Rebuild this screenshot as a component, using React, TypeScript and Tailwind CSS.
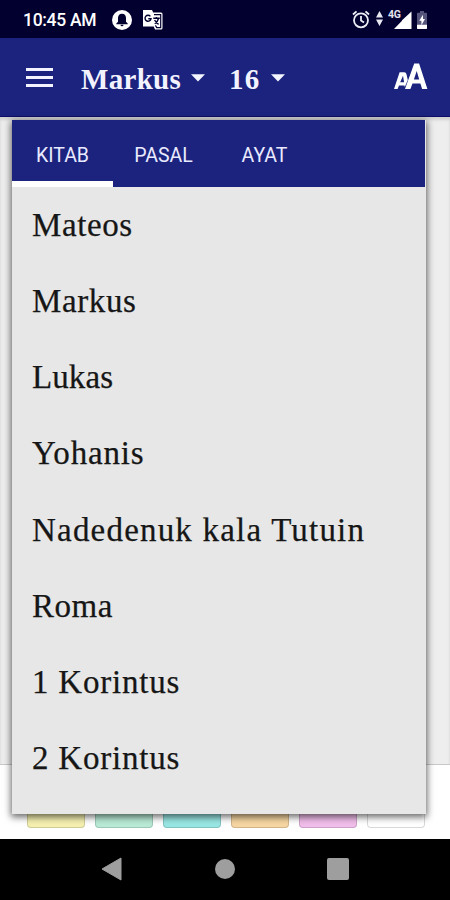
import React from "react";

const books = [
  { name: "Mateos", tracking: "tracking-[0.6px]" },
  { name: "Markus", tracking: "tracking-[0.6px]" },
  { name: "Lukas", tracking: "tracking-[0.1px]" },
  { name: "Yohanis", tracking: "tracking-[0.8px]" },
  { name: "Nadedenuk kala Tutuin", tracking: "tracking-[1.2px]" },
  { name: "Roma", tracking: "tracking-[0.5px]" },
  { name: "1 Korintus", tracking: "tracking-[0.8px]" },
  { name: "2 Korintus", tracking: "tracking-[0.8px]" },
];

const swatches = [
  "bg-[#f5f0b0]",
  "bg-[#b9ead6]",
  "bg-[#98e6e3]",
  "bg-[#f6d6a2]",
  "bg-[#f1bdea]",
  "bg-white",
];

function StatusBar() {
  return (
    <div className="flex h-[38px] shrink-0 items-center bg-[#02002f] pl-[23px] pr-[23px] pt-px text-white">
      <span className="w-[89px] whitespace-nowrap pt-px text-[17.5px] font-medium tracking-[-0.3px]">10:45 AM</span>
      <svg width="20" height="20" viewBox="0 0 20 20">
        <circle cx="10" cy="10" r="10" fill="#fff" />
        <path d="M10 3.7c-2.8 0-4 2-4 4.4v3.6l-1.7 1.8v.7h11.4v-.7L14 11.7V8.1c0-2.4-1.2-4.4-4-4.4Z" fill="#02002f" />
        <path d="M8.5 14.8h3a1.5 1.5 0 0 1-3 0Z" fill="#02002f" />
      </svg>
      <svg className="ml-[10px]" width="22" height="22" viewBox="0 0 22 22">
        <path d="M1 1h9l1.2 2.6H19a1.5 1.5 0 0 1 1.5 1.5v14A1.5 1.5 0 0 1 19 20.6h-6l-1.3-3H1Z" fill="#fff" />
        <path d="M12 5.6h6.7v13h-4l-1.3-2.2" fill="none" stroke="#02002f" strokeWidth="1.2" />
        <path d="M8.4 7.4a3 3 0 1 0 .6 2.4H6.3M11.3 9.3h6.5M14.4 7.9v1.4M16.5 9.5c-.6 2.6-2 4-3.8 5.2M12.6 11c1 2 2.3 3.2 4 4.3" fill="none" stroke="#02002f" strokeWidth="1.4" />
      </svg>
      <div className="ml-auto flex items-center">
        <svg width="18" height="19" viewBox="0 0 18 19" fill="none" stroke="#eeeef6" strokeWidth="1.8">
          <circle cx="9" cy="10.3" r="7" />
          <path d="M9 6v4.6l3 1.9M1 4.5 4.5 1.3M17 4.5l-3.5-3.2" />
        </svg>
        <svg className="mb-[2px] ml-[6px]" width="7" height="15" viewBox="0 0 7 15" fill="#e8e8f2">
          <path d="M3.5 0 7 6.6H0ZM3.5 15 7 8.4H0Z" />
        </svg>
        <div className="relative ml-[5px] h-[20px] w-[24px]">
          <svg className="absolute inset-0" width="24" height="20" viewBox="0 0 24 20">
            <path d="M23.5 1.5v17.5H6L14 10.8V10.2Z" fill="#fff" />
          </svg>
          <span className="absolute left-0 top-[-1px] text-[10.5px] font-bold leading-[11px] tracking-[-0.3px] text-[#e5e5ef]">4G</span>
        </div>
        <svg className="ml-[5px]" width="10" height="18" viewBox="0 0 10 18">
          <path d="M3 0h4v1.8h2.2a.8.8 0 0 1 .8.8v14.6a.8.8 0 0 1-.8.8H.8a.8.8 0 0 1-.8-.8V2.6a.8.8 0 0 1 .8-.8H3Z" fill="#55557c" />
          <path d="M0 13.7h10v3.5a.8.8 0 0 1-.8.8H.8a.8.8 0 0 1-.8-.8Z" fill="#fff" />
          <path d="M6 3.8 2.2 9.8h2.2v4.5L8 8H6Z" fill="#fff" />
        </svg>
      </div>
    </div>
  );
}

function Caret() {
  return (
    <svg className="shrink-0" width="14" height="8" viewBox="0 0 14 8">
      <path d="M0 .3h14L7 7.5Z" fill="#f4f5ff" />
    </svg>
  );
}

function AppBar() {
  return (
    <header className="flex h-[79px] shrink-0 items-center border-b border-[#0c0d67] bg-[#1b237e] pl-[26px] pr-[22px] pt-px text-[#f2f3ff]">
      <div className="flex w-[27px] flex-col gap-[5px]">
        <div className="h-[3px] bg-current" />
        <div className="h-[3px] bg-current" />
        <div className="h-[3px] bg-current" />
      </div>
      <div className="ml-[28px] flex w-[148px] items-center gap-[10px]">
        <span className="w-[100px] pt-[3px] font-['Liberation_Serif',serif] text-[29px] font-bold leading-[36px] tracking-[0.3px]">Markus</span>
        <Caret />
      </div>
      <div className="flex items-center gap-[11px]">
        <span className="w-[31px] pt-[3px] font-['Liberation_Serif',serif] text-[29px] font-bold leading-[36px] tracking-[1.2px]">16</span>
        <Caret />
      </div>
      <svg className="mb-[4px] ml-auto" width="34" height="28" viewBox="0 0 34 28" fill="#fff" fillRule="evenodd">
        <path d="M0 27 5.6 10.2h4.6a2.4 2.4 0 0 1 2.3 2L13.8 18l-3 7-.4-1.6H5L3.6 27ZM6.2 20.2h3.9L9 13.8Z" />
        <path d="M11 27 20.2 1.5h4.9L33.4 27h-5.3l-1.7-5.4h-7.9L16.4 27ZM19.9 17.6h5.3L22.7 9Z" />
      </svg>
    </header>
  );
}

function BookMenu() {
  return (
    <div className="absolute left-[12px] top-[120px] flex h-[694px] w-[414px] flex-col bg-[#e7e7e7] shadow-[0_2px_7px_1px_rgba(0,0,0,0.6)]">
      <div className="flex h-[67px] w-[413px] shrink-0 bg-[#1b237e] text-[19.5px] text-[#e9eaff]">
        <div className="flex w-[101px] items-center justify-center border-b-[6px] border-white pt-[10px]">KITAB</div>
        <div className="flex w-[101px] items-center justify-center pt-[4px]">PASAL</div>
        <div className="flex w-[101px] items-center justify-center pt-[4px]">AYAT</div>
      </div>
      <div className="flex flex-col pl-[20px] pt-[0.5px]">
        {books.map((book) => (
          <div
            key={book.name}
            className="flex h-[76.2px] items-center whitespace-nowrap font-['Liberation_Serif',serif] text-[33px] text-[#161616] [-webkit-text-stroke:0.25px_#161616]"
          >
            <span className={book.tracking}>{book.name}</span>
          </div>
        ))}
      </div>
    </div>
  );
}

export default function App() {
  return (
    <div className="relative flex h-[900px] w-[450px] flex-col overflow-hidden bg-[#eeeeee] font-[Roboto,sans-serif]">
      <StatusBar />
      <AppBar />
      <div className="grow border-b border-[#c8c8c8] bg-[#eeeeee] shadow-[inset_0_3px_3px_rgba(0,0,0,0.12)]" />
      <div className="flex h-[74px] shrink-0 items-end gap-[10.5px] bg-white pb-[11px] pl-[27px]">
        {swatches.map((color) => (
          <div key={color} className={`h-[57px] w-[57.5px] rounded-[4px] border border-black/15 ${color}`} />
        ))}
      </div>
      <nav className="flex h-[61px] shrink-0 items-center bg-black pb-px pl-[101px]">
        <svg width="21" height="24" viewBox="0 0 21 24">
          <path d="M20 1v22L1 12Z" fill="#9e9e9e" stroke="#9e9e9e" strokeLinejoin="round" />
        </svg>
        <div className="ml-[93px] size-[20px] rounded-full bg-[#9e9e9e]" />
        <div className="ml-[92px] size-[22px] rounded-[2px] bg-[#9e9e9e]" />
      </nav>
      <BookMenu />
    </div>
  );
}
